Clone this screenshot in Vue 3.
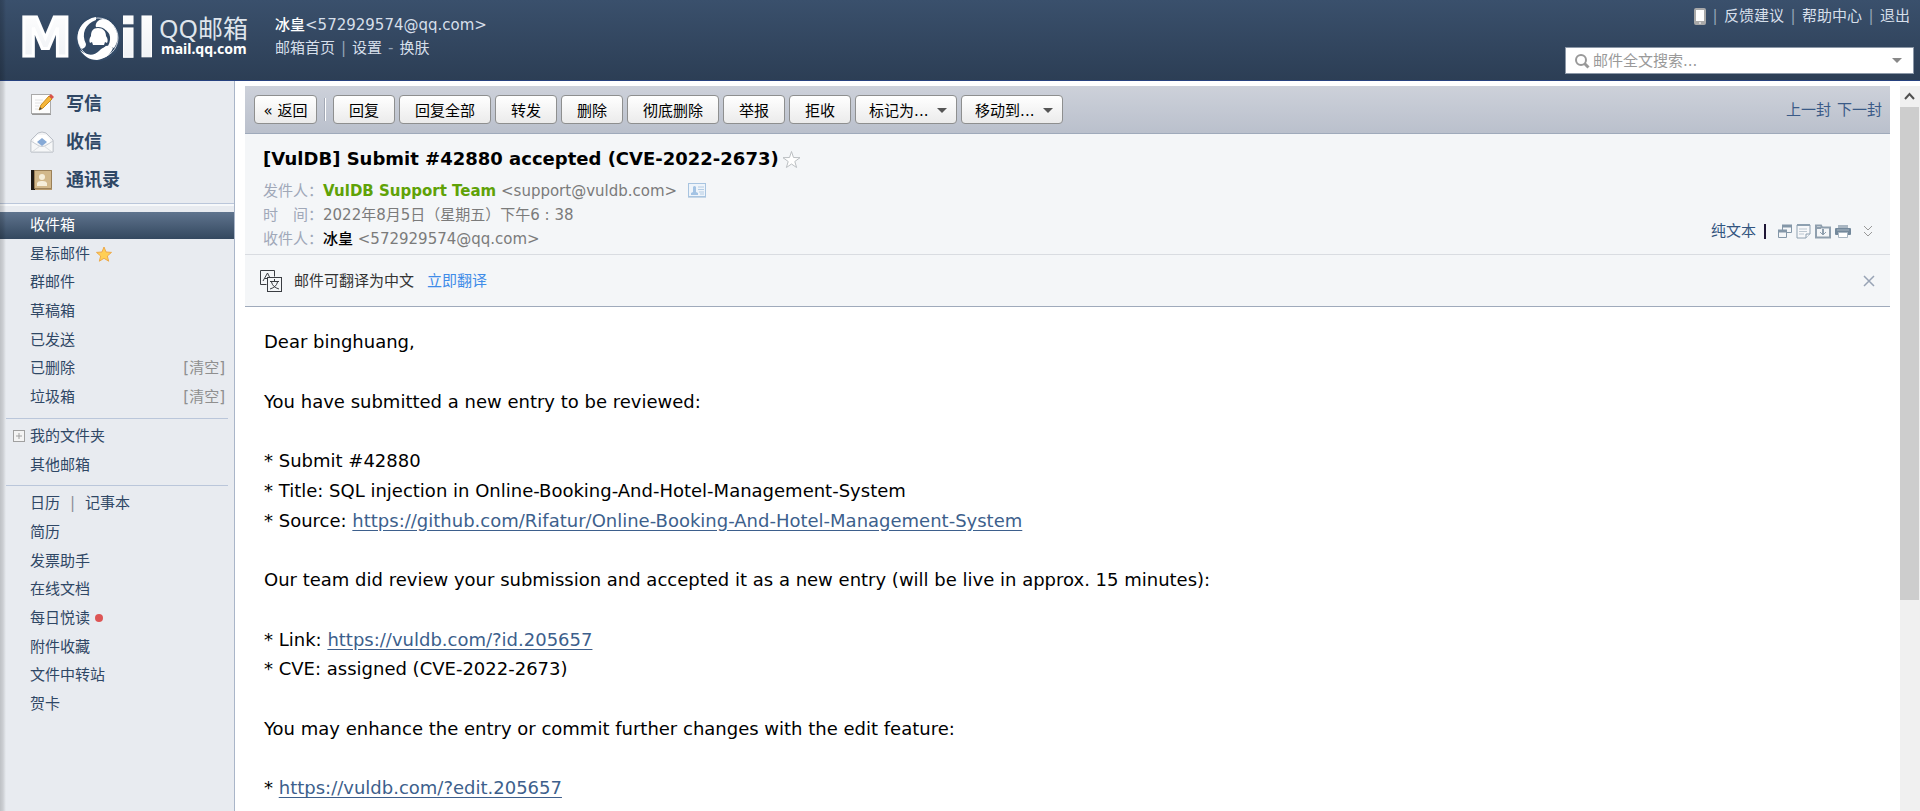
<script setup>
import { ref } from 'vue'

const query = ref('')
const actions = ['回复', '回复全部', '转发', '删除', '彻底删除', '举报', '拒收']
const menus = ['标记为...', '移动到...']
const folders = [
  { name: '收件箱', active: true },
  { name: '星标邮件', star: true },
  { name: '群邮件' },
  { name: '草稿箱' },
  { name: '已发送' },
  { name: '已删除', clear: true },
  { name: '垃圾箱', clear: true },
]
const apps = ['简历', '发票助手', '在线文档', '每日悦读', '附件收藏', '文件中转站', '贺卡']
</script>

<template>
  <div class="page">
    <header class="top">
      <a class="logo" href="#" aria-label="QQ邮箱">
        <svg width="255" height="70" viewBox="0 0 255 70">
          <defs>
            <linearGradient id="lg" x1="0" y1="0" x2="0" y2="1">
              <stop offset="0" stop-color="#fff" />
              <stop offset="1" stop-color="#eceff3" />
            </linearGradient>
          </defs>
          <text class="mark wide" x="19" y="56" font-size="53">M</text>
          <circle cx="98" cy="38" r="23" fill="#334a66" />
          <circle cx="98" cy="38" r="20" fill="none" stroke="#c9d1dc" stroke-width="1" />
          <path d="M96 17c-12 2-20 12-18 24 1 4 2 6 4 8 3-1 4-3 4-5-5-10-1-20 10-24z" fill="#fff" />
          <path d="M97 22c4-5 11-4 16 3 6 8 6 16 1 23l-6-2c5-9 1-18-9-17-4-1-4-4-2-7z" fill="#fff" />
          <path d="M80 50c7 6 14 6 19 1 5-5 9-7 14-3-3 8-9 11-16 12-8 0-13-4-17-10z" fill="#fff" />
          <circle cx="98" cy="38" r="11" fill="#334a66" />
          <path d="M98 28c-5 0-7 3-7 8-2 3-2 5-1 7l2-1 1 3h11l1-3 2 1c1-2 1-4-1-7 0-5-3-8-8-8z" fill="#fff" />
          <text class="mark" x="119" y="57" font-size="54">il</text>
          <text class="brand" x="159" y="38" font-size="25">QQ邮箱</text>
          <text class="domain" x="161" y="54" font-size="14">mail.qq.com</text>
        </svg>
      </a>
      <div class="user">
        <div><b>冰皇</b>&lt;572929574@qq.com&gt;</div>
        <div class="user-links"><a href="#">邮箱首页</a><i>|</i><a href="#">设置</a><i>-</i><a href="#">换肤</a></div>
      </div>
      <div class="tools">
        <nav class="help">
          <a href="#" aria-label="手机版">
            <svg width="12" height="17" viewBox="0 0 12 17"><rect x="1" y="1" width="10" height="15" rx="1" fill="#fff" stroke="#a9a9a9" stroke-width="2" /><path d="M1 14.500h10" stroke="#a9a9a9" stroke-width="3" /><path d="M5 15h2" stroke="#fff" /></svg>
          </a>
          <i>|</i><a href="#">反馈建议</a><i>|</i><a href="#">帮助中心</a><i>|</i><a href="#">退出</a>
        </nav>
        <label class="search">
          <svg width="16" height="16" viewBox="0 0 16 16" fill="none" stroke="#999"><circle cx="7" cy="7" r="5" stroke-width="2" /><path d="M10.500 10.500l4 4" stroke-width="3" /></svg>
          <input v-model="query" type="text" placeholder="邮件全文搜索..." aria-label="邮件全文搜索">
          <span class="caret"></span>
        </label>
      </div>
    </header>

    <div class="body">
      <aside class="side">
        <nav class="primary">
          <a href="#">
            <svg width="24" height="24" viewBox="0 0 24 24"><rect x="1.500" y="2.500" width="19" height="19" fill="#fdfdfd" stroke="#aaa" /><path d="M2 22.500h19" stroke="#999" /><path d="M5 8h8M5 11h7M5 14h4M5 17h3" stroke="#e2e2e2" /><path d="M9 18l2-5 8-9 3 3-9 9z" fill="#f5b63a" stroke="#c98a1c" /><path d="M9 18l1-3 2 2z" fill="#444" /><path d="M19 4l2-2 3 3-2 2z" fill="#d9534a" /></svg>
            写信
          </a>
          <a href="#">
            <svg width="24" height="24" viewBox="0 0 24 24"><path d="M1 10L8 3q4-2 8 0l7 7v12H1z" fill="#f3f4f6" stroke="#b9bec6" /><path d="M4 9l4-4h8l4 4v4H4z" fill="#fff" /><path d="M1 11l8 5q3 1 6 0l8-5v11H1z" fill="#f6f7f8" stroke="#c8ccd2" /><path d="M2 22l8-6M22 22l-8-6" stroke="#d9dce0" /><path d="M7 12l5-4 5 4-5 4z" fill="#86a9d6" /></svg>
            收信
          </a>
          <a href="#">
            <svg width="24" height="24" viewBox="0 0 24 24"><rect x="1" y="2" width="21" height="20" fill="#b89a6c" /><rect x="1" y="2" width="4" height="20" fill="#1f1a16" /><path d="M4.500 2.500h17v18h-17z" fill="#d2b88b" stroke="#9b8058" /><circle cx="12" cy="9" r="3" fill="#f6eeda" /><path d="M7 18v-3q1-2 4-2h2q3 0 4 2v3z" fill="#f6eeda" /></svg>
            通讯录
          </a>
        </nav>
        <ul class="list inbox">
          <li v-for="f in folders" :key="f.name" :class="{ active: f.active }">
            <a href="#">{{ f.name }}</a>
            <svg v-if="f.star" class="gold" width="16" height="16" viewBox="0 0 16 16"><path d="M8 1l2 5 5.500.4-4.200 3.600 1.400 5.200L8 12.300l-4.700 2.900 1.400-5.200L.5 6.400 6 6z" fill="#ffcf55" stroke="#eda94a" /></svg>
            <a v-if="f.clear" class="clear" href="#">[清空]</a>
          </li>
        </ul>
        <ul class="list mine">
          <li>
            <svg class="plus" width="12" height="12" viewBox="0 0 12 12" fill="none" stroke="#a0a0a0"><rect x=".5" y=".5" width="11" height="11" /><path d="M3 6h6M6 3v6" /></svg>
            <a href="#">我的文件夹</a>
          </li>
          <li><a href="#">其他邮箱</a></li>
        </ul>
        <ul class="list apps">
          <li><a href="#">日历</a><i>|</i><a href="#">记事本</a></li>
          <li v-for="a in apps" :key="a"><a href="#">{{ a }}</a><span v-if="a === '每日悦读'" class="dot"></span></li>
        </ul>
      </aside>

      <main class="mail">
        <div class="bar">
          <button type="button" class="back">« 返回</button>
          <span class="sep"></span>
          <button v-for="a in actions" :key="a" type="button">{{ a }}</button>
          <span v-for="m in menus" :key="m" class="pick">
            <select :aria-label="m"><option>{{ m }}</option></select>
            <span class="caret"></span>
          </span>
          <nav class="pager"><a href="#">上一封</a><a href="#">下一封</a></nav>
        </div>

        <section class="info">
          <h1>
            [VulDB] Submit #42880 accepted (CVE-2022-2673)
            <svg width="19" height="19" viewBox="0 0 19 19"><path d="M9.500 1.500l2 6 6.500.2-5.200 3.800 1.800 6-5.100-3.500-5.100 3.500 1.800-6L1 7.700l6.500-.2z" fill="#fff" stroke="#bbbfc2" /></svg>
          </h1>
          <p><span class="key">发件人：</span><b class="from">VulDB Support Team</b> &lt;support@vuldb.com&gt;
            <svg class="card" width="18" height="15" viewBox="0 0 18 15"><rect x=".5" y=".5" width="17" height="13" fill="#eef4fa" stroke="#a8c4e0" /><path d="M0 14.500h18" stroke="#c5d6e6" /><path d="M3 12v-2l2-1V4q1.500-2 3 0v5l2 1v2z" fill="#a3c3e4" /><path d="M10 4h6M10 6.500h6M11 9h5M12 11h4" stroke="#b4cce4" /></svg>
          </p>
          <p><span class="key">时　间：</span>2022年8月5日（星期五）下午6 : 38</p>
          <div class="last">
            <p><span class="key">收件人：</span><span class="to">冰皇</span> &lt;572929574@qq.com&gt;</p>
            <div class="ops">
              <a href="#">纯文本</a><i></i>
              <button type="button" aria-label="新窗口"><svg width="15" height="15" viewBox="0 0 15 15" fill="#f4f6f8" stroke="#8497a8"><path d="M5.500 1.500h9v7h-9z" /><path d="M5 2h10" stroke-width="3" /><path d="M1.500 6.500h8v7h-8z" /><path d="M1 7h9" stroke-width="3" /></svg></button>
              <button type="button" aria-label="便签"><svg width="15" height="15" viewBox="0 0 15 15" fill="#f7f8fa" stroke="#8ea0b0"><path d="M1 1h13v9l-4 4H1z" /><path d="M1 1h13" stroke-width="2" /><path d="M3 5h8M3 7.500h8M3 10h5" stroke="#bcc7d0" /><path d="M10 14v-4h4" /></svg></button>
              <button type="button" aria-label="收藏"><svg width="16" height="15" viewBox="0 0 16 15" fill="none" stroke="#8f9fae"><path d="M1 5V1.500h5l1 2h8v10H1V4h5" stroke-width="2" /><path d="M8 5v5" stroke-width="2" /><path d="M5 8l3 3 3-3" stroke-width="1" /></svg></button>
              <button type="button" aria-label="打印"><svg width="16" height="15" viewBox="0 0 16 15"><path d="M3 1h10v3H3z" fill="#a9b6c2" /><rect x="0" y="4" width="16" height="7" rx="1" fill="#73889b" /><path d="M2 6h12" stroke="#a9b6c2" /><path d="M3.500 8.500h9v5h-9z" fill="#fff" stroke="#a9b6c2" /></svg></button>
              <button type="button" class="more" aria-label="展开"><svg width="10" height="13" viewBox="0 0 10 13" fill="none" stroke="#999"><path d="M1 1l4 4 4-4M1 7l4 4 4-4" /></svg></button>
            </div>
          </div>
        </section>

        <section class="translate">
          <svg width="22" height="22" viewBox="0 0 22 22" fill="none" stroke="#3a3d42"><path d="M6.500 14.500h-6V.5h14v6" /><path d="M3 11l4.500-8 2 4M5 8.500h2" /><rect x="7.500" y="7.500" width="14" height="14" /><path d="M14.500 9v2M10 11.500h9M11.500 12q1 5 7.500 7M17.500 12q-1 5-7.500 7" /></svg>
          <span>邮件可翻译为中文</span>
          <a href="#">立即翻译</a>
          <button type="button" aria-label="关闭"><svg width="12" height="12" viewBox="0 0 12 12" stroke="#98a3b5"><path d="M1 1l10 10M11 1L1 11" stroke-width="1.500" /></svg></button>
        </section>

        <article class="text">
          <p>Dear binghuang,</p>
          <p>You have submitted a new entry to be reviewed:</p>
          <p>* Submit #42880<br>* Title: SQL injection in Online-Booking-And-Hotel-Management-System<br>* Source: <a href="#">https://github.com/Rifatur/Online-Booking-And-Hotel-Management-System</a></p>
          <p>Our team did review your submission and accepted it as a new entry (will be live in approx. 15 minutes):</p>
          <p>* Link: <a href="#">https://vuldb.com/?id.205657</a><br>* CVE: assigned (CVE-2022-2673)</p>
          <p>You may enhance the entry or commit further changes with the edit feature:</p>
          <p>* <a href="#">https://vuldb.com/?edit.205657</a></p>
        </article>
      </main>

      <div class="scroll" aria-hidden="true">
        <svg width="20" height="21" viewBox="0 0 20 21" fill="none" stroke="#505050" stroke-width="2"><path d="M5 13l4.500-5 4.500 5" /></svg>
        <div class="thumb"></div>
      </div>
    </div>
  </div>
</template>

<style>
body { margin: 0; }
</style>

<style scoped>
.page {
  position: relative;
  display: flex;
  flex-direction: column;
  height: 100vh;
  overflow: hidden;
  background: #fff;
  color: #000;
  font: 15px/24px "DejaVu Sans", "Noto Sans CJK SC", sans-serif;
}
.page::after {
  content: "";
  position: absolute;
  inset: 0 auto 0 0;
  width: 6px;
  background: linear-gradient(90deg, rgba(0, 0, 0, .18), rgba(0, 0, 0, .12) 50%, transparent);
  pointer-events: none;
}
a { color: inherit; text-decoration: none; }
i { font-style: normal; }
p, h1, ul { margin: 0; padding: 0; }
svg { flex: none; }
button, select, input { font: inherit; color: inherit; }

.top {
  display: flex;
  height: 80px;
  flex: none;
  border-bottom: 1px solid #26417f;
  background: linear-gradient(#3a506c, #2c3e55);
  color: #d6dfea;
}
.logo { width: 275px; }
.mark { font-family: "DejaVu Sans", sans-serif; font-weight: bold; fill: url(#lg); stroke: #fff; stroke-width: 1; }
.wide { stroke-width: 3; }
.brand { font-family: "Noto Sans", "Noto Sans CJK SC", sans-serif; fill: #dfe5ec; }
.domain { font-family: "Noto Sans", sans-serif; font-weight: bold; fill: #fff; }
.user { flex: 1; padding-top: 14px; line-height: 23px; }
.user b { color: #fff; font-weight: 500; }
.user-links i { padding: 0 6px; color: #93a3b6; }
.tools { display: flex; flex-direction: column; align-items: flex-end; gap: 19px; padding: 4px 6px 0 0; }
.help { display: flex; align-items: center; padding-right: 4px; }
.help a { display: flex; }
.help i { width: 18px; text-align: center; color: #93a3b6; }
.search {
  display: flex;
  align-items: center;
  gap: 3px;
  box-sizing: border-box;
  width: 349px;
  height: 27px;
  padding: 0 11px 0 8px;
  border: 1px solid #8c98a8;
  background: #fff;
}
.search input { flex: 1; min-width: 0; padding: 0; border: 0; outline: 0; background: none; color: #333; }
.search input::placeholder { color: #999; opacity: 1; }
.caret { border: 5px solid transparent; border-top-color: #888; border-bottom: 0; }

.body { display: flex; flex: 1; min-height: 0; }
.side {
  box-sizing: border-box;
  width: 235px;
  flex: none;
  border-right: 1px solid #a9b5c8;
  background: #e8ebf0;
  color: #2f4765;
}
.primary { padding: 4px 0 5px 30px; border-bottom: 1px solid #bac6da; box-shadow: 0 2px #f6f8fa; }
.primary a { display: flex; align-items: center; gap: 12px; height: 37px; font-size: 18px; font-weight: bold; }
.primary a + a { padding-top: 1px; }
.list { list-style: none; line-height: 1.78; }
.list li { position: relative; display: flex; align-items: center; margin-bottom: 2px; padding: 0 9px 0 30px; }
.inbox { padding-top: 8px; }
.list .active { background: linear-gradient(#5f748e, #34485f); color: #fff; }
.gold { margin-left: 6px; }
.clear { margin-left: auto; color: #8f8f8f; }
.mine, .apps { position: relative; margin-top: 7px; padding-top: 5px; }
.mine::before, .apps::before { content: ""; position: absolute; top: 0; left: 6px; right: 6px; height: 1px; background: #bac6da; }
.plus { position: absolute; left: 13px; background: #f4f4f4; }
.apps i { width: 25px; text-align: center; color: #8c8c99; }
.dot { width: 8px; height: 8px; margin-left: 5px; border-radius: 50%; background: #dd5555; }

.mail { flex: 1; min-width: 0; margin: 5px 10px 0; }
.bar {
  display: flex;
  align-items: center;
  gap: 4px;
  height: 47px;
  padding: 0 8px 0 9px;
  border-bottom: 1px solid #9faabb;
  background: linear-gradient(#cdd1da, #bac0cc);
}
.bar button, .pick select {
  box-sizing: border-box;
  height: 29px;
  padding: 3px 15px 0;
  border: 1px solid #8e8f8f;
  border-radius: 4px;
  background: linear-gradient(#fff, #ebebeb);
  line-height: 24px;
  white-space: nowrap;
}
.bar .back { width: 63px; padding: 3px 0 0; }
.sep { width: 1px; height: 23px; margin: 0 3px; border-left: 1px solid #a3a9b5; background: #fff; }
.pick { position: relative; display: flex; }
.pick select { width: 102px; padding: 3px 0 0 13px; appearance: none; outline: 0; }
.pick .caret { position: absolute; top: 13px; right: 10px; border-top-color: #555; pointer-events: none; }
.pager { display: flex; gap: 6px; margin-left: auto; color: #3a5a87; }

.info {
  padding: 7px 17px 3px 18px;
  border-bottom: 1px solid #d9dce1;
  background: #f4f6f8;
  color: #7b7b7b;
}
h1 { display: flex; align-items: center; gap: 3px; height: 36px; margin-bottom: 2px; color: #000; font-size: 18px; }
.key { color: #a0a8b8; }
.from { color: #5fa207; }
.card { margin-left: 6px; vertical-align: -2px; }
.to { color: #000; font-weight: 500; }
.last { display: flex; justify-content: space-between; }
.ops { display: flex; align-items: center; height: 8px; gap: 4px; color: #33557f; }
.ops i { width: 2px; height: 15px; margin: 0 7px 0 4px; background: #1f1636; }
.ops button, .translate button { display: flex; padding: 0; border: 0; background: none; }
.ops .more { margin-left: 8px; }
.translate {
  display: flex;
  align-items: center;
  height: 51px;
  padding: 0 15px;
  border-bottom: 1px solid #9faabb;
  background: #f4f6f8;
  color: #333;
}
.translate span { margin: 0 13px 0 12px; }
.translate a { color: #3f8ce8; }
.translate button { margin-left: auto; }

.text { padding: 20px 19px; font-size: 18px; line-height: 1.653; }
.text p { margin-bottom: 1.653em; }
.text a { color: #3d5f8c; text-decoration: underline; text-underline-offset: 3px; }

.scroll { width: 20px; flex: none; margin-top: 5px; background: #f0f0f0; }
.scroll svg { display: block; }
.thumb { width: 19px; height: 68%; background: #cdcdcd; }
</style>
